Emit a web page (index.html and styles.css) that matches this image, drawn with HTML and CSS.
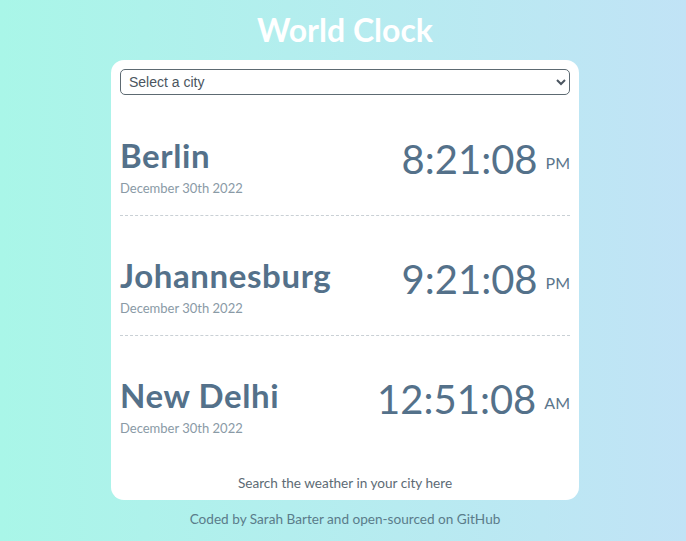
FILE: index.html
```html
<!DOCTYPE html>
<html lang="en">
<head>
<meta charset="utf-8">
<title>World Clock</title>
<link rel="stylesheet" href="styles.css">
</head>
<body>
<h1 class="title">World Clock</h1>
<main class="card">
  <select class="city-select">
    <option>Select a city</option>
  </select>
  <div class="cities">
    <div class="city">
      <div class="city-info">
        <h2 class="city-name">Berlin</h2>
        <div class="city-date">December 30th 2022</div>
      </div>
      <div class="city-time">8:21:08<small class="ampm">PM</small></div>
    </div>
    <div class="city">
      <div class="city-info">
        <h2 class="city-name">Johannesburg</h2>
        <div class="city-date">December 30th 2022</div>
      </div>
      <div class="city-time">9:21:08<small class="ampm">PM</small></div>
    </div>
    <div class="city last">
      <div class="city-info">
        <h2 class="city-name">New Delhi</h2>
        <div class="city-date">December 30th 2022</div>
      </div>
      <div class="city-time">12:51:08<small class="ampm">AM</small></div>
    </div>
  </div>
  <p class="weather-link">Search the weather in your city here</p>
</main>
<footer class="footer">Coded by Sarah Barter and open-sourced on GitHub</footer>
</body>
</html>
```
FILE: styles.css
```css
html, body {
  margin: 0;
  padding: 0;
}
body {
  min-height: 541px;
  box-sizing: border-box;
  padding-left: 4px;
  background: linear-gradient(to right, #a9f6e8 0%, #c1e3f6 100%);
  font-family: "Lato", "Noto Sans", sans-serif;
  color: #54718a;
  display: flex;
  flex-direction: column;
  align-items: center;
}
.title {
  margin: 10px 0 0;
  font-size: 32px;
  line-height: 40px;
  font-weight: 700;
  color: #ffffff;
}
.card {
  margin-top: 10px;
  width: 468px;
  box-sizing: border-box;
  background: #ffffff;
  border-radius: 13px;
  padding: 9px 9px 8px;
}
.city-select {
  display: block;
  width: 450px;
  height: 26px;
  font-family: "Liberation Sans", Arial, sans-serif;
  font-size: 14px;
  color: #4b5560;
  border: 1px solid #5d6a72;
  border-radius: 5px;
  background: #ffffff;
  padding: 0 4px;
}
.cities {
  margin-top: 1px;
}
.city {
  display: flex;
  justify-content: space-between;
  align-items: flex-start;
  padding: 39px 0 19px;
  border-bottom: 1px dashed #c9d0d5;
}
.city.last {
  border-bottom: none;
}
.city-name {
  margin: 0;
  font-size: 33px;
  line-height: 40px;
  font-weight: 700;
  letter-spacing: 0.6px;
}
.city-date {
  margin-top: 5px;
  font-size: 13px;
  line-height: 16px;
  color: #8a9aa6;
}
.city-time {
  font-size: 40px;
  font-weight: 400;
  line-height: 48px;
  white-space: nowrap;
}
.ampm {
  margin-left: 8px;
  font-size: 16px;
  vertical-align: 5px;
  color: #5b768c;
}
.weather-link {
  margin: 19px 0 0;
  text-align: center;
  font-size: 13.6px;
  line-height: 18px;
  color: #5d6b75;
}
.footer {
  margin-top: 11px;
  font-size: 13.6px;
  line-height: 16px;
  color: #5a7c8a;
}
```
